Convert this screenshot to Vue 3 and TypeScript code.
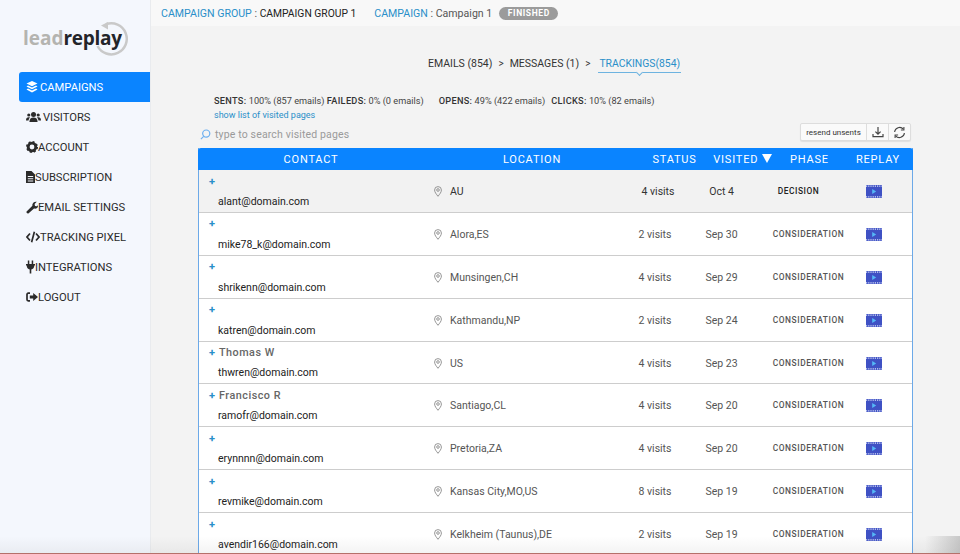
<template>
  <div class="page">
    <aside class="sidebar">
      <div class="logo">
        <span class="logo-text"><span class="lead">lead</span>replay</span>
        <svg class="logo-ring" width="34" height="36" viewBox="0 0 34 36" fill="none">
          <path d="M11 2.300 A15.500 15.500 0 1 1 2.500 24" stroke="#c9c9c9" stroke-width="2.500" />
          <path d="M6 3.600 L13 0 L13 7.400 Z" fill="#c9c9c9" />
        </svg>
      </div>
      <nav class="nav">
        <a v-for="item in navItems" :key="item.label" class="nav-item" :class="{ active: item.active }">
          <svg class="nav-icon" :style="{ width: item.w + 'px' }" :viewBox="`0 0 ${item.w} 14`" fill="currentColor" v-html="item.icon"></svg>
          <span :style="{ marginLeft: item.gap + 'px' }">{{ item.label }}</span>
        </a>
      </nav>
    </aside>

    <main class="main">
      <header class="topbar">
        <span class="crumb-link">CAMPAIGN GROUP</span>
        <span class="crumb-sep">&nbsp;:&nbsp;</span>
        <span class="crumb-dark">CAMPAIGN GROUP 1</span>
        <span class="crumb-link second">CAMPAIGN</span>
        <span class="crumb-sep">&nbsp;:&nbsp;</span>
        <span class="crumb-gray">Campaign 1</span>
        <span class="badge">FINISHED</span>
      </header>

      <div class="steps">
        <span>EMAILS (854)</span>
        <span class="gt">&gt;</span>
        <span>MESSAGES (1)</span>
        <span class="gt">&gt;</span>
        <span class="step-active">TRACKINGS(854)</span>
      </div>

      <div class="stats">
        <span><b>SENTS:</b> 100% (857 emails) <b>FAILEDS:</b> 0% (0 emails)</span>
        <span class="stat-open"><b>OPENS:</b> 49% (422 emails)</span>
        <span class="stat-click"><b>CLICKS:</b> 10% (82 emails)</span>
      </div>
      <a class="show-list">show list of visited pages</a>

      <div class="tools">
        <div class="search">
          <svg width="11" height="11" viewBox="0 0 12 12" fill="none" stroke="#6aaef0" stroke-width="1.300">
            <circle cx="6.800" cy="5" r="3.900" />
            <path d="M4 8 L1 11" />
          </svg>
          <span>type to search visited pages</span>
        </div>
        <div class="btn-group">
          <button class="btn">resend unsents</button>
          <button class="btn icon-btn">
            <svg width="12" height="12" viewBox="0 0 12 12" fill="none" stroke="#444" stroke-width="1.200">
              <path d="M6 1v7M3.400 5.600 6 8.200l2.600-2.600M1 8v2.600h10V8" />
            </svg>
          </button>
          <button class="btn icon-btn">
            <svg width="13" height="13" viewBox="0 0 13 13" fill="none" stroke="#444" stroke-width="1.100">
              <path d="M1.600 6A5 5 0 0 1 10.400 3.200M11.400 7A5 5 0 0 1 2.600 9.800" />
              <path d="M10.900 1v3h-3M2.100 12V9h3" />
            </svg>
          </button>
        </div>
      </div>

      <section class="table">
        <div class="thead">
          <span>CONTACT</span>
          <span>LOCATION</span>
          <span>STATUS</span>
          <span>VISITED <i class="caret"></i></span>
          <span>PHASE</span>
          <span>REPLAY</span>
        </div>
        <div v-for="row in rows" :key="row.email" class="row" :class="{ current: row.phase === 'DECISION' }">
          <div class="contact">
            <div class="contact-name"><span class="plus">+</span><span class="name">{{ row.name }}</span></div>
            <div class="email">{{ row.email }}</div>
          </div>
          <div class="location">
            <svg width="8" height="11" viewBox="0 0 8 11" fill="none" stroke="#8a8a8a" stroke-width="0.900">
              <path d="M4 10.300C2.400 8.200 .6 6.300 .6 4A3.400 3.400 0 0 1 7.400 4C7.400 6.300 5.600 8.200 4 10.300Z" />
              <circle cx="4" cy="4" r="1.300" />
            </svg>
            <span>{{ row.location }}</span>
          </div>
          <div class="visits">{{ row.visits }} visits</div>
          <div class="date">{{ row.date }}</div>
          <div class="phase">{{ row.phase }}</div>
          <div class="replay">
            <svg width="16" height="13" viewBox="0 0 16 13">
              <rect width="16" height="13" fill="#3f51c4" />
              <path d="M0 1.200h16M0 11.800h16" stroke="#d8def8" stroke-width="1.200" stroke-dasharray="1.200 1" />
              <path d="M6.200 4 10.200 6.500 6.200 9Z" fill="#55b8f7" />
            </svg>
          </div>
        </div>
      </section>
    </main>
    <div class="bottom-edge"></div>
  </div>
</template>

<script setup lang="ts">
interface NavItem {
  label: string
  icon: string
  w: number
  gap: number
  active?: boolean
}

interface Row {
  name: string
  email: string
  location: string
  visits: number
  date: string
  phase: string
}

const navItems: NavItem[] = [
  {
    label: 'CAMPAIGNS',
    active: true,
    w: 12,
    gap: 2,
    icon: '<path d="M6 1 11.500 3.600 6 6.200.5 3.600Z"/><path d="M2 5.600.5 6.600 6 9.200l5.500-2.600L10 5.600 6 7.500Z"/><path d="M2 8.600.5 9.600 6 12.400l5.500-2.800L10 8.600 6 10.600Z"/>',
  },
  {
    label: 'VISITORS',
    w: 15,
    gap: 2,
    icon: '<circle cx="7.500" cy="4.600" r="2.500"/><circle cx="2.800" cy="5" r="1.600"/><circle cx="12.200" cy="5" r="1.600"/><path d="M3.400 12c0-3.200 1.600-4.600 4.100-4.600s4.100 1.400 4.100 4.600Z"/><path d="M0 10.400c0-2 .9-3.200 2.600-3.200.6 0 1 .2 1.400.4C3.200 8.400 2.700 9.300 2.500 10.400ZM15 10.400c0-2-.9-3.200-2.600-3.200-.6 0-1 .2-1.400.4.800.8 1.300 1.700 1.500 2.800Z"/>',
  },
  {
    label: 'ACCOUNT',
    w: 12,
    gap: 0,
    icon: '<circle cx="6" cy="7" r="3.800" fill="none" stroke="currentColor" stroke-width="2.800"/><circle cx="6" cy="7" r="5.200" fill="none" stroke="currentColor" stroke-width="1.600" stroke-dasharray="2 2.080"/>',
  },
  {
    label: 'SUBSCRIPTION',
    w: 9,
    gap: 0,
    icon: '<path fill-rule="evenodd" d="M0 1h5.500L9 4.500V13H0ZM1.800 6v1h5.400V6ZM1.800 8.200v1h5.400v-1ZM1.800 10.400v1h5.400v-1Z"/>',
  },
  {
    label: 'EMAIL SETTINGS',
    w: 12,
    gap: 0,
    icon: '<path d="M.6 11.400 6.400 5.800C5.900 3.800 7.600 1.300 10.800 1.800L8.600 4l.4 1.900 1.900.4 1-1C12.400 8 10 9.200 8 8.600L2.400 13.400C1.200 13.900 0 12.600.6 11.400Z"/>',
  },
  {
    label: 'TRACKING PIXEL',
    w: 14,
    gap: 0,
    icon: '<path d="M4 3.500 1 7l3 3.500M10 3.500 13 7l-3 3.500M8.400 1.800 5.600 12.200" fill="none" stroke="currentColor" stroke-width="1.700"/>',
  },
  {
    label: 'INTEGRATIONS',
    w: 9,
    gap: 0,
    icon: '<rect x="1.800" y="0.500" width="1.500" height="4"/><rect x="5.700" y="0.500" width="1.500" height="4"/><path d="M0 4h9v1.600H8.300C8.300 7.800 7 9.200 5.300 9.500v4H3.700v-4C2 9.200.7 7.800.7 5.600H0Z"/>',
  },
  {
    label: 'LOGOUT',
    w: 12,
    gap: 0,
    icon: '<path d="M4 3.200H2.200C1.500 3.200 1 3.700 1 4.400v5.200c0 .7.5 1.200 1.200 1.200H4" fill="none" stroke="currentColor" stroke-width="1.700"/><path d="M3.800 5.500h3.400V3L12 7l-4.800 4V8.500H3.800Z"/>',
  },
]

const rows: Row[] = [
  { name: '', email: 'alant@domain.com', location: 'AU', visits: 4, date: 'Oct 4', phase: 'DECISION' },
  { name: '', email: 'mike78_k@domain.com', location: 'Alora,ES', visits: 2, date: 'Sep 30', phase: 'CONSIDERATION' },
  { name: '', email: 'shrikenn@domain.com', location: 'Munsingen,CH', visits: 4, date: 'Sep 29', phase: 'CONSIDERATION' },
  { name: '', email: 'katren@domain.com', location: 'Kathmandu,NP', visits: 2, date: 'Sep 24', phase: 'CONSIDERATION' },
  { name: 'Thomas W', email: 'thwren@domain.com', location: 'US', visits: 4, date: 'Sep 23', phase: 'CONSIDERATION' },
  { name: 'Francisco R', email: 'ramofr@domain.com', location: 'Santiago,CL', visits: 4, date: 'Sep 20', phase: 'CONSIDERATION' },
  { name: '', email: 'erynnnn@domain.com', location: 'Pretoria,ZA', visits: 4, date: 'Sep 20', phase: 'CONSIDERATION' },
  { name: '', email: 'revmike@domain.com', location: 'Kansas City,MO,US', visits: 8, date: 'Sep 19', phase: 'CONSIDERATION' },
  { name: '', email: 'avendir166@domain.com', location: 'Kelkheim (Taunus),DE', visits: 2, date: 'Sep 19', phase: 'CONSIDERATION' },
]
</script>

<style scoped>
.page {
  position: relative;
  display: flex;
  height: 554px;
  overflow: hidden;
  font-family: Roboto, "Liberation Sans", sans-serif;
  color: #222;
}

.sidebar {
  flex: 0 0 151px;
  box-sizing: border-box;
  background: #f4f7fd;
  border-right: 1px solid #e9ebee;
  padding-left: 19px;
}

.logo {
  position: relative;
  height: 72px;
  box-sizing: border-box;
  padding: 24px 0 0 4px;
}

.logo-text {
  font-family: "Open Sans", sans-serif;
  font-size: 19px;
  font-weight: 700;
  letter-spacing: -0.3px;
  line-height: 28px;
  color: #23252a;
}

.lead {
  color: #b4b4b0;
  letter-spacing: 0;
}

.logo-ring {
  position: absolute;
  left: 76px;
  top: 22px;
}

.nav {
  display: flex;
  flex-direction: column;
}

.nav-item {
  display: flex;
  align-items: center;
  height: 30px;
  padding-left: 7px;
  font-size: 11.200px;
  color: #2b2b2b;
}

.nav-item.active {
  background: #0a84ff;
  color: #fff;
  border-radius: 3px 0 0 3px;
}

.nav-icon {
  height: 14px;
  flex: none;
}

.main {
  flex: 1;
  min-width: 0;
  background: #f3f3f3;
}

.topbar {
  display: flex;
  align-items: center;
  height: 26px;
  padding-left: 10px;
  background: #f8f8f8;
  font-size: 10.600px;
}

.crumb-link {
  color: #2a8fc9;
}

.crumb-link.second {
  margin-left: 18px;
}

.crumb-sep,
.crumb-gray {
  color: #555;
}

.crumb-dark {
  color: #222;
  font-size: 10.300px;
}

.badge {
  margin-left: 7px;
  width: 59px;
  text-align: center;
  height: 13px;
  line-height: 13px;
  border-radius: 7px;
  background: #9b9b9b;
  color: #fff;
  font-size: 8.500px;
  font-weight: 700;
  letter-spacing: 0.6px;
}

.steps {
  display: flex;
  align-items: center;
  margin-top: 29px;
  padding-left: 277px;
  height: 16px;
  font-size: 10.500px;
  color: #333;
}

.gt {
  margin: 0 6px;
  font-size: 10px;
}

.step-active {
  position: relative;
  margin-left: 3px;
  color: #2a8fc9;
  font-size: 10.400px;
}

.step-active::before {
  content: "";
  position: absolute;
  left: -1px;
  right: -1px;
  bottom: -3px;
  border-bottom: 1px solid #6db3e0;
}

.step-active::after {
  content: "";
  position: absolute;
  left: 38px;
  bottom: -5px;
  width: 4px;
  height: 4px;
  background: #f3f3f3;
  border-right: 1px solid #6db3e0;
  border-bottom: 1px solid #6db3e0;
  transform: rotate(45deg);
}

.stats {
  display: flex;
  margin: 22px 0 0 63px;
  height: 15px;
  line-height: 15px;
  font-size: 9.200px;
  color: #444;
}

.stats b {
  font-weight: 500;
  color: #333;
  letter-spacing: 0.3px;
}

.stat-open {
  margin-left: 15px;
}

.stat-click {
  margin-left: 6px;
}

.show-list {
  display: block;
  margin-left: 63px;
  height: 15px;
  line-height: 15px;
  font-size: 9px;
  color: #2a8fc9;
}

.tools {
  display: flex;
  justify-content: space-between;
  height: 20px;
  margin: 0 48px 0 49px;
  margin-top: -1px;
}

.search {
  display: flex;
  align-items: center;
  gap: 4px;
  padding-top: 4px;
  font-size: 10.500px;
  color: #9a9a9a;
  letter-spacing: 0.15px;
}

.btn-group {
  display: flex;
  box-sizing: border-box;
  height: 18px;
  margin-top: 1px;
  margin-right: 1px;
  border: 1px solid #ddd;
  border-radius: 2px;
  box-shadow: 0 1px 1px rgba(0, 0, 0, 0.08);
  background: #fafafa;
}

.btn {
  border: 0;
  background: none;
  padding: 0;
  font: 8px Roboto, sans-serif;
  color: #333;
  display: flex;
  align-items: center;
  width: 65px;
  justify-content: center;
  white-space: nowrap;
}

.icon-btn {
  width: 22px;
  padding: 0;
  border-left: 1px solid #ddd;
}

.table {
  margin: 6px 47px 0 47px;
  border-left: 1px solid #6ca9e8;
  border-right: 1px solid #6ca9e8;
}

.thead {
  display: grid;
  grid-template-columns: 226px 216px 68px 66px 70px 68px;
  align-items: center;
  height: 22px;
  margin: 0 -1px;
  border-radius: 3px 3px 0 0;
  background: #0a84ff;
  color: #fff;
  font-size: 11px;
  letter-spacing: 0.8px;
  text-align: center;
}

.thead span {
  white-space: nowrap;
}

.thead span:nth-child(3) { padding-left: 1px; }
.thead span:nth-child(4) { padding-left: 3px; }
.thead span:nth-child(5) { padding-left: 1px; }

.caret {
  display: inline-block;
  margin-left: 0;
  border-left: 5px solid transparent;
  border-right: 5px solid transparent;
  border-top: 9px solid #fff;
}

.row {
  display: grid;
  grid-template-columns: 226px 204px 52px 81px 93px 38px;
  align-items: center;
  box-sizing: border-box;
  height: 42.900px;
  background: #fff;
  border-bottom: 1px solid #cdcdcd;
  font-size: 10.500px;
  color: #555;
}

.row.current {
  background: #f2f2f2;
  color: #333;
}

.contact {
  display: flex;
  flex-direction: column;
  justify-content: space-between;
  height: 100%;
  box-sizing: border-box;
  padding: 4px 0 4px 10px;
}

.contact-name {
  display: flex;
  align-items: center;
  height: 14px;
}

.plus {
  width: 10px;
  color: #2a8fc9;
  font-size: 11px;
  font-weight: 700;
}

.name {
  font-weight: 500;
  font-size: 10.800px;
  letter-spacing: 0.5px;
  color: #666;
}

.email {
  margin-left: 9px;
  font-size: 10.500px;
  color: #222;
  white-space: nowrap;
}

.location {
  display: flex;
  align-items: center;
  gap: 8px;
  padding: 1px 0 0 9px;
  white-space: nowrap;
}

.visits,
.date,
.phase {
  text-align: center;
  white-space: nowrap;
}

.visits,
.date {
  padding-top: 1px;
}

.current .visits {
  padding-left: 6px;
}

.phase {
  font-size: 8.400px;
  font-weight: 500;
  letter-spacing: 0.55px;
}

.current .phase {
  color: #222;
  padding-right: 20px;
}

.replay {
  display: flex;
  justify-content: center;
  padding-top: 1px;
}

.bottom-edge {
  position: absolute;
  left: 0;
  right: 0;
  bottom: 0;
  height: 18px;
  background:
    linear-gradient(to left, rgba(70, 70, 70, 0.25), rgba(70, 70, 70, 0) 35px),
    linear-gradient(to bottom, rgba(60, 60, 60, 0), rgba(60, 60, 60, 0.06));
  border-bottom: 1px solid #b5706a;
  box-sizing: border-box;
  pointer-events: none;
}
</style>

<style>
body {
  background: #fff;
}
</style>
